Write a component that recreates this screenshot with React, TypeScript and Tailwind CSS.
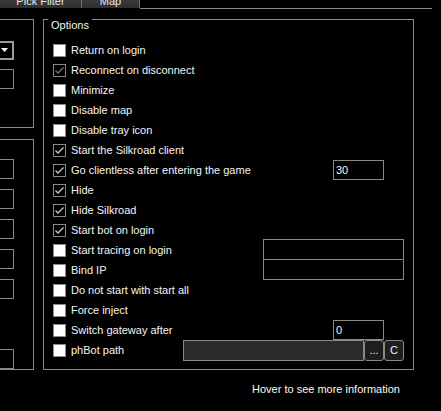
import React from 'react';

type Row = {
  label: string;
  checked?: boolean;
  dim?: boolean;
  extra?: 'num30' | 'wide' | 'wideJoin' | 'num0' | 'path';
};

const rows: Row[] = [
  { label: 'Return on login' },
  { label: 'Reconnect on disconnect', checked: true, dim: true },
  { label: 'Minimize' },
  { label: 'Disable map' },
  { label: 'Disable tray icon' },
  { label: 'Start the Silkroad client', checked: true },
  { label: 'Go clientless after entering the game', checked: true, extra: 'num30' },
  { label: 'Hide', checked: true },
  { label: 'Hide Silkroad', checked: true },
  { label: 'Start bot on login', checked: true },
  { label: 'Start tracing on login', extra: 'wide' },
  { label: 'Bind IP', extra: 'wideJoin' },
  { label: 'Do not start with start all' },
  { label: 'Force inject' },
  { label: 'Switch gateway after', extra: 'num0' },
  { label: 'phBot path', extra: 'path' },
];

const Check = ({ checked, dim }: { checked?: boolean; dim?: boolean }) => (
  <div
    className={
      'w-[13px] h-[13px] shrink-0 border border-[#8a8a85] flex items-center justify-center ' +
      (checked ? 'bg-black' : 'bg-white')
    }
  >
    {checked && (
      <svg width="11" height="11" viewBox="0 0 11 11">
        <path
          d="M1.5 5.5 L4 8 L9.5 2.5"
          fill="none"
          stroke={dim ? '#7a7a7a' : '#c8c8c8'}
          strokeWidth="1.3"
        />
      </svg>
    )}
  </div>
);

const Extra = ({ kind }: { kind?: Row['extra'] }) => {
  if (kind === 'num30' || kind === 'num0')
    return (
      <div className="w-[51px] h-[20px] mr-[20px] border border-[#8a8a85] bg-black text-[#f4f4f4] px-[2px] leading-[18px]">
        {kind === 'num30' ? '30' : '0'}
      </div>
    );
  if (kind === 'wide')
    return <div className="w-[141px] h-[21px] mt-[-1px] border border-[#8a8a85] bg-black" />;
  if (kind === 'wideJoin')
    return <div className="w-[141px] h-[20px] mt-[-1px] border border-[#8a8a85] border-t-0 bg-black" />;
  if (kind === 'path')
    return (
      <div className="flex items-center">
        <div className="w-[181px] h-[21px] border border-[#8a8a85] bg-[#2b2b2b]" />
        <div className="w-[20px] h-[21px] border border-[#8a8a85] rounded-[3px] bg-[#1e1e1e] text-[#f4f4f4] flex items-center justify-center leading-none">
          ...
        </div>
        <div className="w-[20px] h-[21px] border border-[#8a8a85] rounded-[3px] bg-[#1e1e1e] text-[#f4f4f4] flex items-center justify-center leading-none">
          C
        </div>
      </div>
    );
  return null;
};

export default function App() {
  return (
    <div className="w-[441px] h-[411px] bg-black overflow-hidden text-[11px] text-[#f4f4f4] font-['Liberation_Sans',Arial,sans-serif]">
      {/* tabs */}
      <div className="flex h-[9px] items-end">
        <div className="flex h-[8px] self-start overflow-hidden">
          <div className="w-[82px] h-[20px] mt-[-12px] border-r border-[#6e6e6e] bg-gradient-to-b from-[#4a4a4a] to-[#2f2f2f] text-center text-[#e8e8e8] leading-[27px]">
            Pick Filter
          </div>
          <div className="w-[58px] h-[20px] mt-[-12px] border-r border-[#6e6e6e] bg-gradient-to-b from-[#4a4a4a] to-[#2f2f2f] text-center text-[#e8e8e8] leading-[27px]">
            Map
          </div>
        </div>
        <div className="w-[292px] border-b border-[#8a8a85]" />
      </div>

      <div className="flex mt-[10px]">
        {/* left column */}
        <div className="w-[34px] shrink-0 flex flex-col">
          <div className="h-[109px] border-t border-r border-b border-[#8a8a85] pt-[21px] flex flex-col gap-[9px]">
            <div className="w-[14px] h-[19px] border-2 border-l-0 border-[#9a9a95] bg-black flex items-center">
              <svg width="8" height="5" viewBox="0 0 8 5" className="ml-[1px]">
                <path d="M0 0 L7 0 L3.5 4 Z" fill="#f4f4f4" />
              </svg>
            </div>
            <div className="w-[14px] h-[20px] border border-l-0 border-[#8a8a85]" />
          </div>
          <div className="h-[231px] mt-[11px] border-t border-r border-b border-[#8a8a85] pt-[19px] flex flex-col gap-[10px]">
            <div className="w-[14px] h-[20px] border border-l-0 border-[#8a8a85]" />
            <div className="w-[14px] h-[20px] border border-l-0 border-[#8a8a85]" />
            <div className="w-[14px] h-[20px] border border-l-0 border-[#8a8a85]" />
            <div className="w-[14px] h-[20px] border border-l-0 border-[#8a8a85]" />
            <div className="w-[14px] h-[20px] border border-l-0 border-[#8a8a85]" />
            <div className="w-[14px] h-[20px] border border-l-0 border-[#8a8a85] mt-[40px]" />
          </div>
        </div>

        {/* options group */}
        <div className="ml-[9px] w-[371px] h-[351px] border border-[#8a8a85] relative pt-[20px] pl-[9px] pr-[9px]">
          <div className="absolute left-[4px] top-[-2px] bg-black px-[3px] leading-[14px] text-[#f4f4f4]">
            Options
          </div>
          {rows.map((r) => (
            <div key={r.label} className="h-[20px] flex items-center">
              <Check checked={r.checked} dim={r.dim} />
              <span className="ml-[5px] flex-1 whitespace-nowrap">{r.label}</span>
              <Extra kind={r.extra} />
            </div>
          ))}
        </div>
      </div>

      <div className="mt-[12px] pl-[252px] leading-[14px] text-[#fffbe8]">Hover to see more information</div>
    </div>
  );
}
